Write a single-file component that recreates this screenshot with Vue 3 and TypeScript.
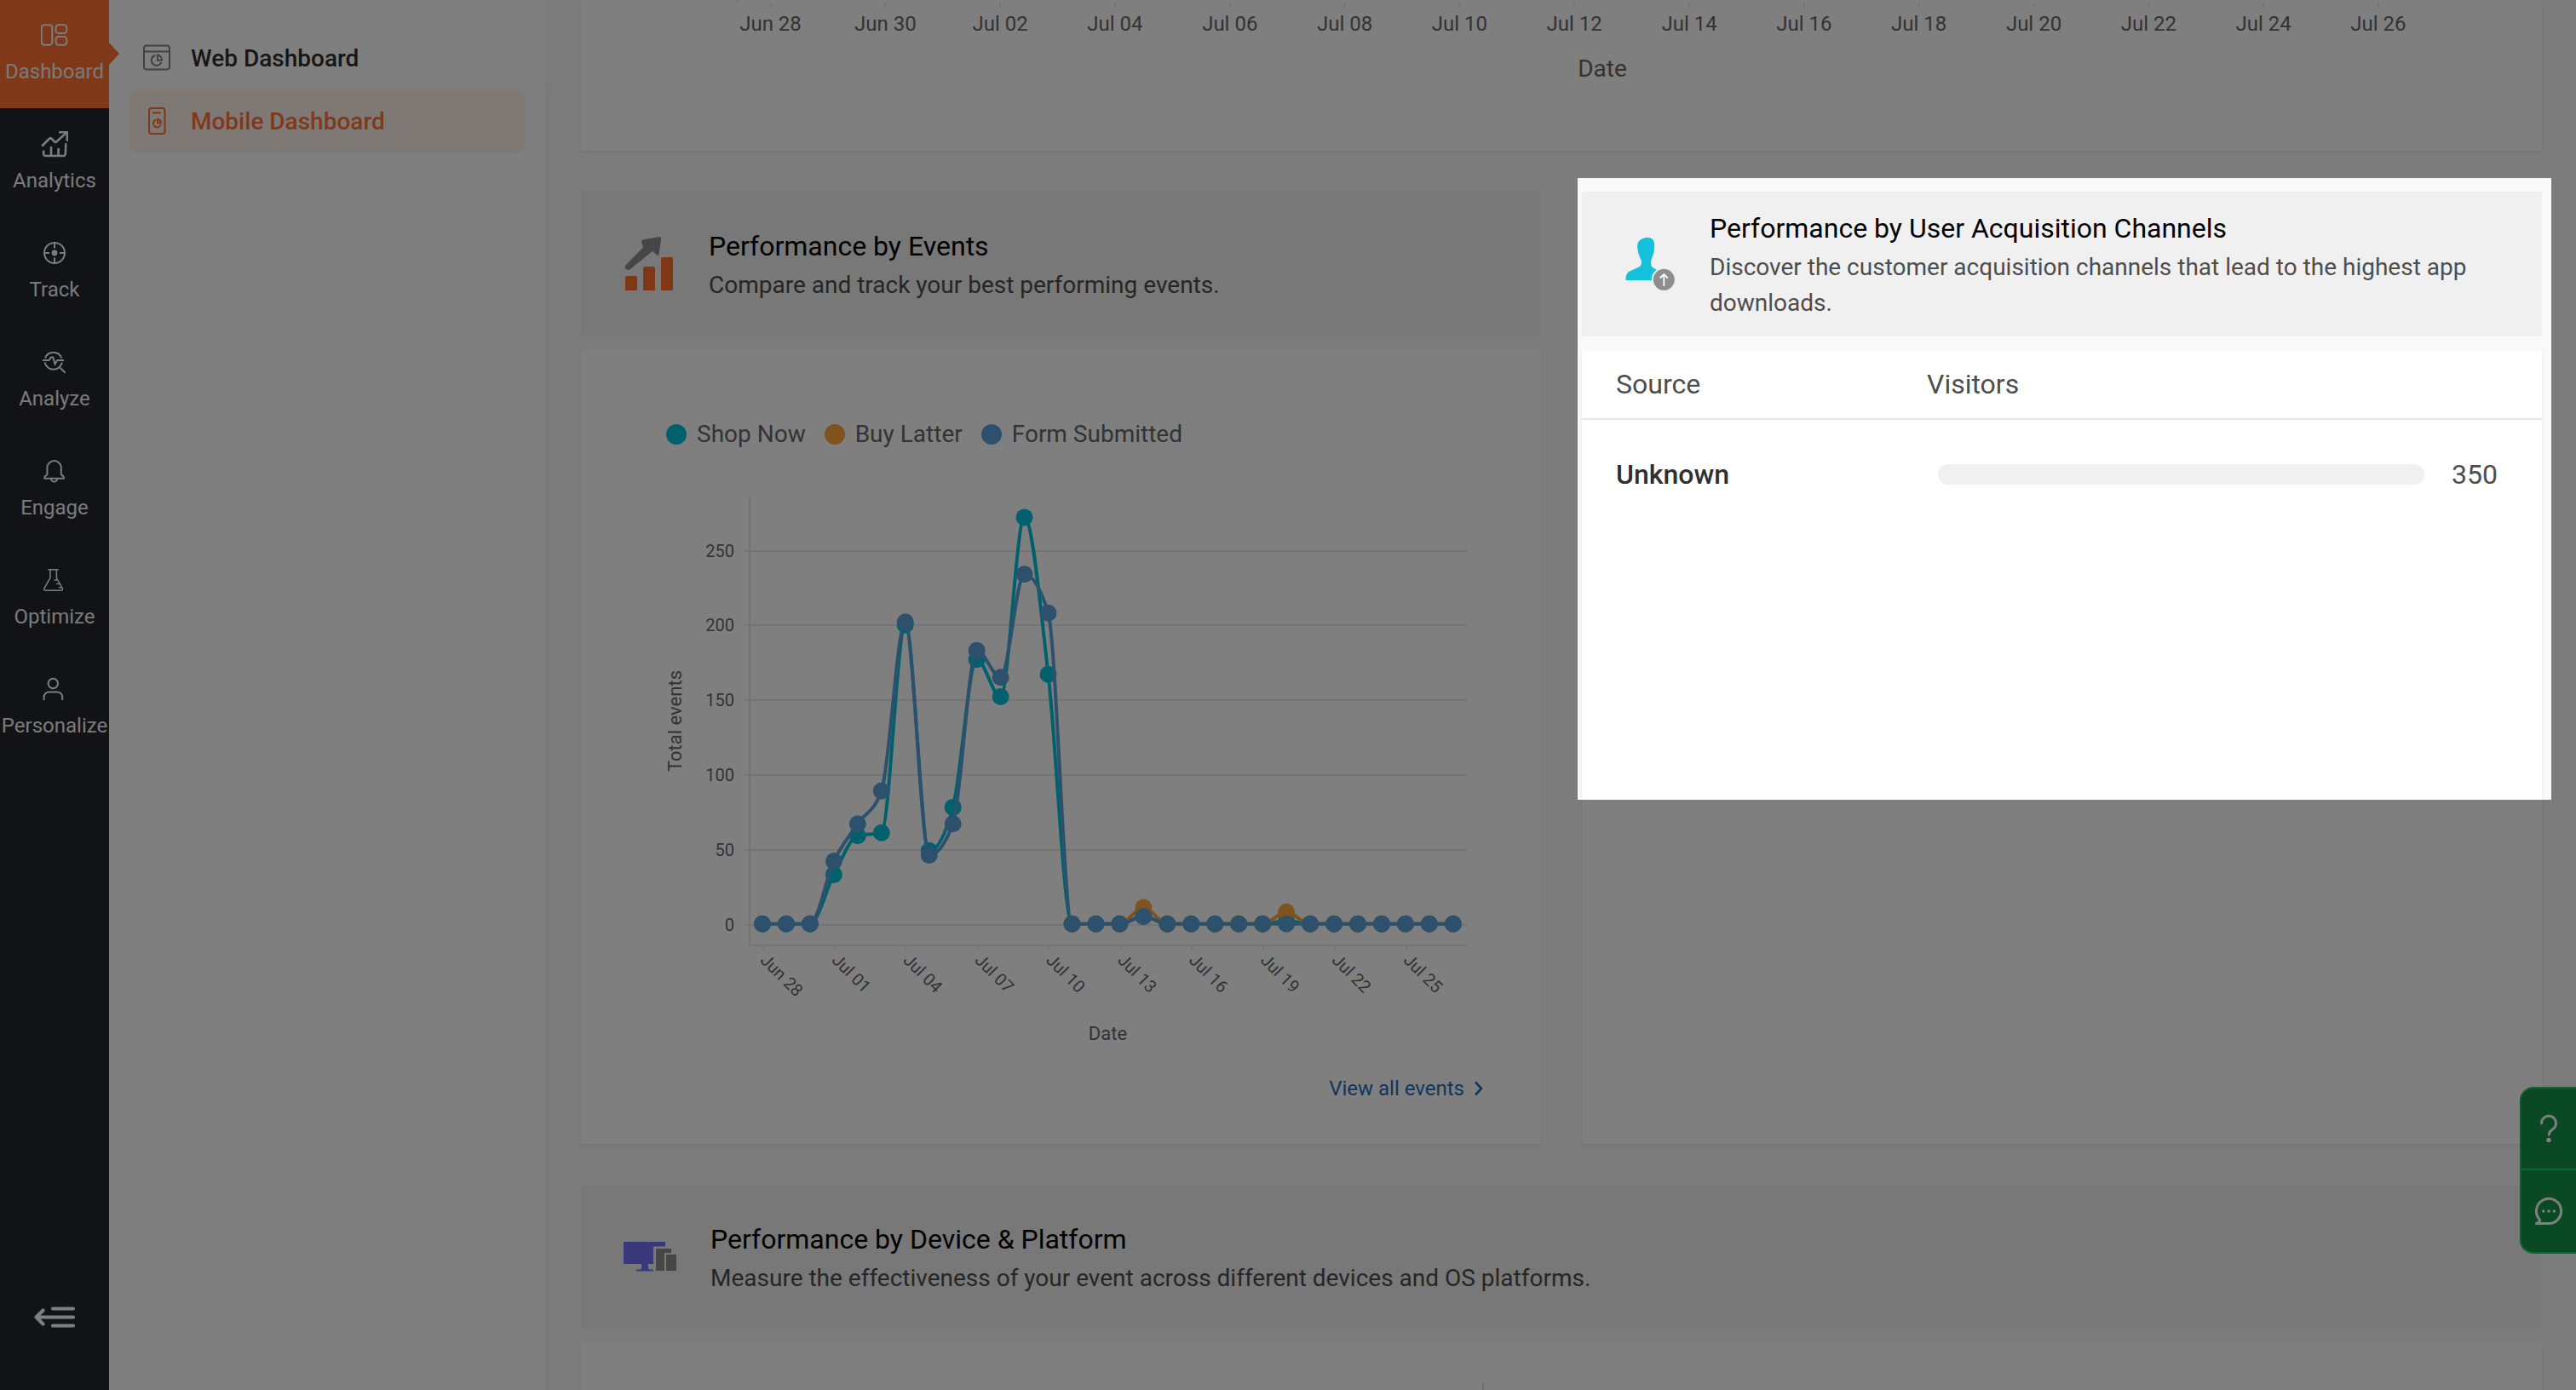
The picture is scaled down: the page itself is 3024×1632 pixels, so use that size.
<script setup lang="ts">
interface NavItem { label: string; paths: string[]; dot?: boolean }
interface Series { name: string; color: string; first: number; values: number[] }

const nav: NavItem[] = [
  { label: 'Dashboard', paths: [
    'M52 29.2h6a3.3 3.3 0 0 1 3.3 3.3v17a3.3 3.3 0 0 1-3.3 3.3h-6a3.3 3.3 0 0 1-3.3-3.3v-17a3.3 3.3 0 0 1 3.3-3.3z',
    'M68.8 29.2h6.2a3.3 3.3 0 0 1 3.3 3.3v3.2a3.3 3.3 0 0 1-3.3 3.3h-6.2a3.3 3.3 0 0 1-3.3-3.3v-3.2a3.3 3.3 0 0 1 3.3-3.3z',
    'M68.8 43h6.2a3.3 3.3 0 0 1 3.3 3.3v3.2a3.3 3.3 0 0 1-3.3 3.3h-6.2a3.3 3.3 0 0 1-3.3-3.3v-3.2a3.3 3.3 0 0 1 3.3-3.3z'] },
  { label: 'Analytics', paths: [
    'M49.2 43.5l9-9q1-.9 2 0l4 4q1 .9 2 0L78.4 27.4', 'M69 27.2h9.8v10.5',
    'M51.2 48.5v4.3a2.2 2.2 0 0 0 2.2 2.2h21.2a2.2 2.2 0 0 0 2.2-2.2l.5-12.6', 'M60 44v10.5', 'M68.6 46v8.5'] },
  { label: 'Track', dot: true, paths: [
    'M64 29a12 12 0 1 1 0 24a12 12 0 1 1 0-24z', 'M64 29v6.5M64 46.500v6.500M52 41h6M70 41h6'] },
  { label: 'Analyze', paths: [
    'M53 36.500a10.300 10.300 0 0 1 19.300 0', 'M52.600 41.500a10.300 10.300 0 0 0 20.200 0', 'M70.200 47.500l6.500 6.300',
    'M50 39h7.500l2.300-3.500 2.400 0 2.400 8 2.500-4.500h8'] },
  { label: 'Engage', paths: [
    'M55.400 44.300v-7a8.200 8.200 0 0 1 16.400 0v7q0 1 1 1.800l1.500 1.200q1 .9.600 2.500h-22.600q-.5-1.600.5-2.500l1.600-1.200q1-.8 1-1.800z',
    'M60 49.900a3.600 3.600 0 0 0 7.200 0'] },
  { label: 'Optimize', paths: [
    'M56.300 28.800h12.500', 'M59 29v9.500l-7 12q-1 2.700 1.500 2.700h18.200q2.500 0 1.500-2.700l-6.800-12v-9.500', 'M63.500 41h4M66 45.500h4.500M69 49.800h4'] },
  { label: 'Personalize', paths: [
    'M62.300 28.800a5.700 5.700 0 1 1 0 11.400a5.700 5.700 0 1 1 0-11.400z',
    'M51.600 54v-3.500a6 6 0 0 1 6-6h9.600a6 6 0 0 1 6 6v3.500'] },
]

const topDates = ['Jun 28', 'Jun 30', 'Jul 02', 'Jul 04', 'Jul 06', 'Jul 08', 'Jul 10', 'Jul 12',
  'Jul 14', 'Jul 16', 'Jul 18', 'Jul 20', 'Jul 22', 'Jul 24', 'Jul 26']
const eventDates = ['Jun 28', 'Jul 01', 'Jul 04', 'Jul 07', 'Jul 10', 'Jul 13', 'Jul 16', 'Jul 19', 'Jul 22', 'Jul 25']

// Daily values from the series' first recorded day up to Jul 27; missing days are zero.
const fill = (v: Record<number, number>, first = 0): number[] =>
  Array.from({ length: 30 - first }, (_, i) => v[i + first] ?? 0)
const series: Series[] = [
  { name: 'Shop Now', color: '#00c3da', first: 0,
    values: fill({ 3: 33, 4: 59, 5: 61, 6: 200, 7: 49, 8: 78, 9: 177, 10: 152, 11: 272, 12: 167, 16: 5, 22: 2 }) },
  { name: 'Buy Latter', color: '#fda63a', first: 13, values: fill({ 16: 11, 22: 8 }, 13) },
  { name: 'Form Submitted', color: '#5ba3da', first: 0,
    values: fill({ 3: 42, 4: 67, 5: 89, 6: 202, 7: 46, 8: 67, 9: 183, 10: 165, 11: 234, 12: 208, 16: 5 }) },
]

const ticks = [
  { value: 0, y: 675 }, { value: 50, y: 587 }, { value: 100, y: 499 },
  { value: 150, y: 411 }, { value: 200, y: 323 }, { value: 250, y: 236 },
]

const step = 27.96
const px = (i: number): number => 213 + i * step
const py = (v: number): number => 673.8 - v * 1.755

// Monotone cubic path: the curve never overshoots its data points.
function curve({ values, first }: Series): string {
  const s = values.slice(1).map((v, i) => v - values[i])
  const tangent = values.map((_, i) => {
    if (i === 0 || i === values.length - 1) return 0
    const a = s[i - 1]
    const b = s[i]
    return (Math.sign(a) + Math.sign(b)) * Math.min(Math.abs(a), Math.abs(b), Math.abs(a + b) / 4)
  })
  let d = `M${px(first)} ${py(values[0])}`
  for (let i = 1; i < values.length; i++) {
    const x0 = px(first + i - 1)
    const x1 = px(first + i)
    d += `C${x0 + step / 3} ${py(values[i - 1] + tangent[i - 1] / 3)} ${x1 - step / 3} ${py(values[i] - tangent[i] / 3)} ${x1} ${py(values[i])}`
  }
  return d
}
</script>

<template>
  <div class="page">
    <nav class="rail">
      <div v-for="(n, i) in nav" :key="n.label" class="rail-item" :class="{ active: i === 0 }">
        <svg width="32" height="32" viewBox="48 25 32 32" class="rail-icon" :class="{ thin: i === 5, bold: i === 1 }">
          <path v-for="p in n.paths" :key="p" :d="p" />
          <circle v-if="n.dot" cx="64" cy="41" r="3.400" class="solid" />
        </svg>
        <span class="rail-label">{{ n.label }}</span>
      </div>
      <svg class="collapse" width="50" height="26" viewBox="40 0 50 26">
        <path d="M62 3.500h24M44 13.500h42M62 23.500h24M50.500 5.500l-8 8l8 8" />
      </svg>
    </nav>

    <aside class="submenu">
      <div class="sub-item">
        <svg width="32" height="32" viewBox="0 0 32 32" class="sub-icon">
          <rect x="1" y="1.500" width="30" height="28" rx="3" /><path d="M1 8.500h30" />
          <path d="M14.500 13a6 6 0 1 0 6.800 8M17 12.500a6 6 0 0 1 5 6.300h-5z" />
        </svg>
        <span>Web Dashboard</span>
      </div>
      <div class="sub-item current">
        <svg width="32" height="32" viewBox="0 0 32 32" class="sub-icon">
          <rect x="7" y="1" width="18.500" height="30" rx="3" /><path d="M11 6.500h10" />
          <path d="M15 14.500a4.600 4.600 0 1 0 5.800 6M17 14a4.600 4.600 0 0 1 4 4.600h-4z" />
        </svg>
        <span>Mobile Dashboard</span>
      </div>
    </aside>

    <main class="main">
      <section class="card trend">
        <svg width="2302" height="177" class="plot">
          <g class="grid"><path d="M183.500 0v3" />
            <path v-for="(_, i) in topDates" :key="i" :d="`M${222.500 + i * 134.820} 3v6`" /></g>
          <g class="t24"><text v-for="(d, i) in topDates" :key="d" :x="222.500 + i * 134.820" y="36">{{ d }}</text></g>
          <text x="1199" y="90" class="t28">Date</text>
        </svg>
      </section>

      <div class="columns">
        <section class="column">
          <header class="head">
            <svg class="head-icon" width="60" height="66" viewBox="732 278 60 66">
              <path fill="#8c8c8c" d="M734 313l21-21.500-2-6.500q-.5-2 1.500-2.500l19.500-3.400q2.300-.2 2.200 2l-2.700 18.500q-.8 2-2.500.8l-5-4.400-26 21q-1.500 1.500-3.500.8t-2.500-1.800q-.7-2 0-3z" />
              <path fill="#fd7131" d="M734 342v-15q0-2 2-2h10q2 0 2 2v15zM755 342v-26q0-2 2-2h10q2 0 2 2v26zM776 342v-37q0-2 2-2h10q2 0 2 2v37z" />
            </svg>
            <div><h2>Performance by Events</h2><p>Compare and track your best performing events.</p></div>
          </header>
          <div class="card events">
            <div class="legend">
              <span v-for="s in series" :key="s.name" class="legend-item">
                <i class="swatch" :style="{ background: s.color }"></i>{{ s.name }}
              </span>
            </div>
            <svg width="1127" height="690" viewBox="0 133 1127 690" class="plot">
              <g class="grid">
                <path v-for="t in ticks" :key="t.value" :d="`M191 ${t.y}H1040`" />
                <path d="M198 172V699H1040" />
                <path v-for="(_, i) in eventDates" :key="i" :d="`M${214 + i * step * 3} 699v5`" />
              </g>
              <g class="t20 end"><text v-for="t in ticks" :key="t.value" x="180" :y="t.y + 7">{{ t.value }}</text></g>
              <g class="t20 start"><text v-for="(d, i) in eventDates" :key="d"
                :transform="`translate(${209.500 + i * step * 3} 717.500) rotate(45)`">{{ d }}</text></g>
              <text class="t22" transform="translate(118 435.500) rotate(-90)">Total events</text>
              <text class="t22" x="618.500" y="809.500">Date</text>
              <g v-for="s in series" :key="s.name">
                <path :d="curve(s)" fill="none" :stroke="s.color" stroke-width="4" />
                <circle v-for="(v, i) in s.values" :key="i" :cx="px(s.first + i)" :cy="py(v)" r="10" :fill="s.color" />
              </g>
            </svg>
            <a class="more">View all events
              <svg width="14" height="20" viewBox="0 0 14 20"><path d="M3 2.500l7 7.500l-7 7.500" /></svg>
            </a>
          </div>
        </section>

        <section class="column">
          <header class="head channels">
            <svg class="head-icon" width="60" height="64" viewBox="1906 278 60 64">
              <path fill="#14c1dc" d="M1930 279.500c3-.8 7-.6 9 .7 2.500 1.500 3.500 5 3 11q.2 6-3 12-.8 2-1 5 0 5 3 6.500 9 4 11 6v8.300h-43.500q-.3-7 3.500-10l13-6q2-1.500 2-4.500-.3-4-2-6.500-2.500-5.500-3-12-.3-8.500 8-10.500z" />
              <circle cx="1953.300" cy="328.300" r="13.500" fill="#8e8e8e" stroke="#f0f0f0" stroke-width="2" />
              <path d="M1953.300 336v-13.500M1948.800 326.500l4.500-4.500l4.500 4.500" fill="none" stroke="#fff" stroke-width="1.800" />
            </svg>
            <div><h2>Performance by User Acquisition Channels</h2><p>Discover the customer acquisition channels that lead to the highest app downloads.</p></div>
          </header>
          <div class="card sources">
            <div class="row th"><span class="source">Source</span><span>Visitors</span></div>
            <div class="row"><b class="source">Unknown</b><i class="bar"></i><span>350</span></div>
          </div>
        </section>
      </div>

      <header class="head device">
        <svg class="head-icon" width="64" height="40" viewBox="731 1457 64 40">
          <path fill="#7371f5" d="M732 1459h49v5.500h-14v20.500h-6.500l1 6.500h5.500v2h-20v-2h5.500l1-6.500h-21.500z" />
          <path fill="#8c8c8c" d="M770 1467h18v5h-8v21h-10zM782 1474h12v19h-12z" />
        </svg>
        <div><h2>Performance by Device &amp; Platform</h2><p>Measure the effectiveness of your event across different devices and OS platforms.</p></div>
      </header>
      <section class="card platform"><i class="rule"></i></section>
    </main>

    <div class="help">
      <div class="help-cell">
        <svg width="32" height="36" viewBox="0 0 32 36"><path d="M7.500 12a8.500 8.500 0 1 1 14.300 6q-5.300 3.200-5.500 7.200" /><circle cx="16" cy="31.500" r="2.700" class="dot" /></svg>
      </div>
      <div class="help-cell">
        <svg width="34" height="34" viewBox="0 0 34 34"><path d="M2.500 31.600h14.500a14.600 14.600 0 1 0-11-5q1.500 1.600 0 2.800z" /><g class="dot"><circle cx="10.700" cy="17" r="1.700" /><circle cx="17" cy="17" r="1.700" /><circle cx="23.300" cy="17" r="1.700" /></g></svg>
      </div>
    </div>
    <div class="spotlight"></div>
  </div>
</template>

<style>
html, body { background: #7d7d7d; overflow: hidden; }
</style>

<style scoped>
.page { position: relative; display: flex; width: 3024px; height: 1632px; overflow: hidden; background: #f9f9f9; font-family: Roboto, sans-serif; color: #4d4d4d; }
svg { display: block; flex: none; }
.rail { position: relative; z-index: 3; display: flex; flex-direction: column; flex: none; width: 128px; background: #24262e; }
.rail-item { box-sizing: border-box; position: relative; display: flex; flex-direction: column; align-items: center; height: 128px; padding-top: 25px; color: #f4f4f4; }
.rail-item.active { height: 127px; margin-bottom: 1px; background: #ff7230; }
.rail-item.active::after { content: ''; position: absolute; left: 128px; top: 50px; border: 13px solid transparent; border-left: 12px solid #ff7230; border-right: 0; }
.rail-icon { fill: none; stroke: #f8f8f8; stroke-width: 2; }
.rail-icon.thin { stroke-width: 1.500; }
.rail-icon.bold { stroke-width: 2.600; }
.solid { fill: #f8f8f8; stroke: none; }
.rail-label { margin-top: 13px; font-size: 24px; line-height: 28px; white-space: nowrap; }
.collapse { margin: auto 0 73px 40px; fill: none; stroke: #fff; stroke-width: 4.200; stroke-linecap: round; stroke-linejoin: round; }
.submenu { position: relative; z-index: 2; box-sizing: border-box; flex: none; width: 512px; padding: 31px 24px; background: #fff; box-shadow: 0 100px 16px rgba(0, 0, 0, .060); }
.sub-item { display: flex; align-items: center; gap: 24px; height: 74px; padding-left: 16px; border-radius: 8px; font-size: 28px; font-weight: 500; color: #2f2f2f; }
.sub-item.current { background: #fff2ed; color: #ff7230; }
.sub-icon { fill: none; stroke: #848484; stroke-width: 2; }
.current .sub-icon { stroke: #ff7230; }
.main { flex: none; display: flex; flex-direction: column; width: 2302px; padding-left: 42px; }
.card { background: #fff; box-shadow: 0 2px 4px rgba(0, 0, 0, .080); }
.trend { height: 177px; flex: none; }
.plot { overflow: visible; }
.grid { fill: none; stroke: #e8e8e8; stroke-width: 2; }
text { fill: #666; text-anchor: middle; }
.t20 { font-size: 20px; } .t22 { font-size: 22px; } .t24 { font-size: 24px; } .t28 { font-size: 28px; }
.end text { text-anchor: end; } .start text { text-anchor: start; }
.columns { display: grid; grid-template-columns: 1127px 1127px; gap: 48px; margin-top: 48px; }
.column { display: flex; flex-direction: column; gap: 16px; }
.head { box-sizing: border-box; flex: none; display: flex; align-items: center; gap: 40px; height: 170px; padding-left: 50px; background: #f0f0f0; }
h2 { margin: 0; font-size: 32px; line-height: 48px; font-weight: 400; color: #000; }
p { margin: 1px 0 -1px; font-size: 28px; line-height: 42px; }
.channels { gap: 41px; padding: 0 60px 0 49px; }
.device { gap: 39px; padding-left: 49px; margin-top: 48px; }
.events { display: flex; flex-direction: column; height: 932px; }
.legend { display: flex; gap: 22px; height: 21px; padding: 87px 0 25px 100px; font-size: 28px; line-height: 24px; color: #666; }
.legend-item { display: flex; gap: 12px; }
.swatch { width: 24px; height: 24px; border-radius: 50%; }
.more { align-self: flex-end; display: flex; align-items: center; gap: 10px; margin: 29px 66px 0 0; font-size: 24px; line-height: 30px; color: #216dbb; }
.more svg { fill: none; stroke: #216dbb; stroke-width: 2.600; }
.sources { height: 932px; }
.row { display: flex; align-items: center; height: 128px; padding-left: 40px; font-size: 32px; }
.row.th { height: 80px; line-height: 80px; border-bottom: 2px solid #e8e8e8; }
.source { width: 366px; }
.th .source { width: 365px; }
.row b { font-weight: 500; color: #2f2f2f; }
.bar { flex: none; width: 571px; height: 24px; margin: 0 32px 0 12px; border-radius: 12px; background: #f0f0f0; }
.platform { flex: none; height: 80px; margin-top: 16px; }
.rule { display: block; width: 2px; height: 32px; margin: 48px 0 0 1058px; background: #ddd; float: left; }
.help { position: absolute; z-index: 4; right: 0; top: 1276px; box-sizing: border-box; width: 66px; height: 196px; border: 2px solid #19d569; border-color: #3abf70 #18d468 #18d468 #2db063; border-right: 0; border-radius: 16px 0 0 16px; background: #12954a; }
.help-cell { box-sizing: border-box; display: flex; align-items: center; justify-content: center; height: 94px; }
.help-cell + .help-cell { height: 98px; border-top: 2px solid #14d468; }
.help svg { margin-left: 0; fill: none; stroke: #fff; stroke-width: 3; stroke-linecap: round; stroke-linejoin: round; }
.help .dot { fill: #fff; stroke: none; }
.spotlight { position: absolute; z-index: 5; left: 1852px; top: 209px; width: 1143px; height: 730px; box-shadow: 0 0 0 3000px rgba(0, 0, 0, .5); }
</style>
